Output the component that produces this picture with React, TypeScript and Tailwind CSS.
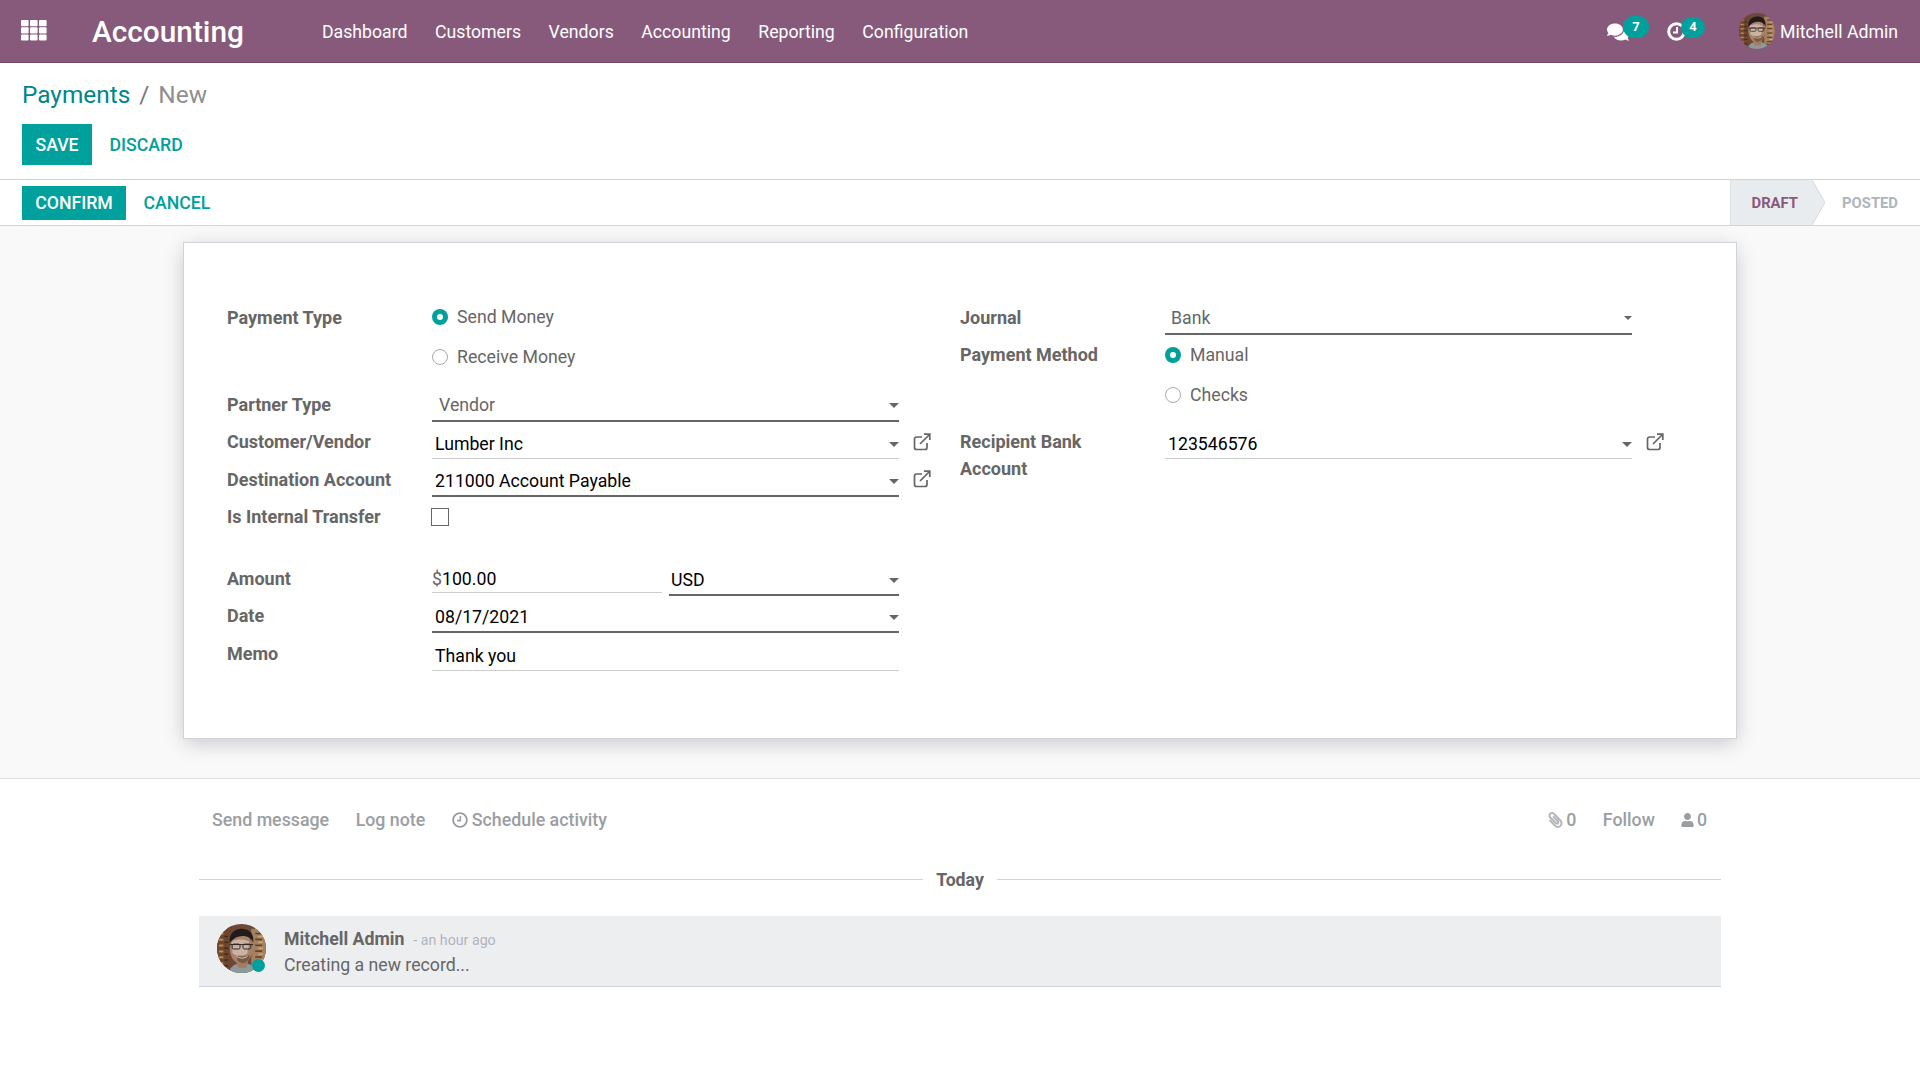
import React from 'react';
import { FaComments, FaPaperclip, FaUser } from 'react-icons/fa';

const navItems = ['Dashboard', 'Customers', 'Vendors', 'Accounting', 'Reporting', 'Configuration'];

const Caret = ({ small }: { small?: boolean }) => (
  <span className={small ? 'border-x-[4px] border-t-[4px] border-x-transparent border-t-[#666]' : 'border-x-[5px] border-t-[5px] border-x-transparent border-t-[#666]'} />
);

const ExternalIcon = () => (
  <svg viewBox="0 0 18 18" className="h-[18px] w-[18px] fill-none stroke-[#666] stroke-[1.7]">
    <path d="M14 10v4.5a2 2 0 0 1-2 2H3.5a2 2 0 0 1-2-2V6a2 2 0 0 1 2-2H9" />
    <path d="M7 11 16 2M11 1.2h5.8V7" />
  </svg>
);

const AppsIcon = () => (
  <svg viewBox="0 0 26 21" className="-mt-[2px] h-[21px] w-[26px] fill-white">
    {[0, 9, 18].map((x) =>
      [0, 7.2, 14.4].map((y) => <rect key={`${x}-${y}`} x={x} y={y} width="7.6" height="6.2" rx="1" />)
    )}
  </svg>
);

const ActivityClock = () => (
  <svg viewBox="0 0 19 19" className="h-[19px] w-[19px] fill-none stroke-white">
    <circle cx="9.5" cy="9.5" r="7.8" strokeWidth="3" />
    <path d="M10 5v5.5H6" strokeWidth="2" />
  </svg>
);

const ScheduleClock = () => (
  <svg viewBox="0 0 16 16" className="h-[16px] w-[16px] fill-none stroke-[#9a9ea3]">
    <circle cx="8" cy="8" r="6.9" strokeWidth="1.9" />
    <path d="M8.4 4v4.6H5" strokeWidth="1.6" />
  </svg>
);

// rough drawing of the user photo
const Avatar = ({ className }: { className: string }) => (
  <svg viewBox="0 0 100 100" className={className}>
    <defs>
      <clipPath id="avatar-clip"><circle cx="50" cy="50" r="50" /></clipPath>
    </defs>
    <g clipPath="url(#avatar-clip)">
      <rect width="100" height="100" fill="#6d4a36" />
      <rect x="0" y="0" width="30" height="100" fill="#6e4630" />
      <rect x="70" y="10" width="30" height="75" fill="#a4805f" />
      {[18, 30, 42, 54, 66, 78].map((y) => (
        <g key={y}>
          <rect x="4" y={y} width="9" height="4" fill="#c08a50" />
          <rect x="15" y={y + 6} width="8" height="3" fill="#3f2a1e" />
          <rect x="78" y={y} width="14" height="3" fill="#5a3d2c" />
          <rect x="84" y={y + 6} width="10" height="3" fill="#d0a478" />
        </g>
      ))}
      <path d="M24 100c2-14 14-20 28-20s30 6 32 20z" fill="#8d9a9c" />
      <path d="M38 74h26l-4 16H44z" fill="#a47c62" />
      <ellipse cx="49" cy="50" rx="23" ry="31" fill="#a8836c" />
      <path d="M30 36c10-6 26-6 36 0l-4 24c-8 6-22 6-30 0z" fill="#c9b3a4" />
      <path d="M42 66c-4 8 4 14 10 14s16-6 14-18l-4 4z" fill="#7a5847" />
      <path d="M26 38c-2-20 12-30 28-28 14 1 22 12 20 28-3-8-8-12-16-13-12-2-22 2-32 13z" fill="#211b1c" />
      <g fill="none" stroke="#2f2523" strokeWidth="2">
        <path d="M26 42h48" />
        <rect x="31" y="41" width="16" height="10" rx="3" />
        <rect x="53" y="41" width="16" height="10" rx="3" />
      </g>
      <path d="M39 65c6 5 18 5 24 0-3 7-20 7-24 0z" fill="#efe6dd" />
    </g>
  </svg>
);

const Radio = ({ label, checked }: { label: string; checked?: boolean }) => (
  <div className="flex h-[40px] items-center gap-[9px] text-[#666]">
    {checked ? (
      <span className="flex h-[16px] w-[16px] items-center justify-center rounded-full bg-[#00A09D]">
        <span className="h-[6px] w-[6px] rounded-full bg-white" />
      </span>
    ) : (
      <span className="h-[16px] w-[16px] rounded-full border border-[#a9a9a9] bg-white" />
    )}
    <span>{label}</span>
  </div>
);

const FieldLabel = ({ children }: { children: React.ReactNode }) => (
  <div className="pt-[6.5px] text-[18px] leading-[27px] font-bold text-[#666]">{children}</div>
);

type SelectProps = {
  value: string;
  pale?: boolean;
  thick?: boolean;
  small?: boolean;
  indent?: string;
  link?: boolean;
};

const SelectValue = ({ value, pale, thick, small, indent = 'pl-[3px]', link }: SelectProps) => (
  <div className="relative">
    <div className={`flex h-[37.5px] items-center justify-between ${indent} ${pale ? 'pt-[7px] text-[#666]' : 'pt-[9px] text-black'} ${thick ? 'border-b-2 border-[#666]' : 'border-b border-[#ccc]'}`}>
      <span>{value}</span>
      <Caret small={small} />
    </div>
    {link && (
      <span className="absolute top-[11px] left-[481px]">
        <ExternalIcon />
      </span>
    )}
  </div>
);

const Row = ({ label, children }: { label: React.ReactNode; children: React.ReactNode }) => (
  <div className="grid grid-cols-[205px_467px]">
    <FieldLabel>{label}</FieldLabel>
    {children}
  </div>
);

export default function App() {
  return (
    <div className="min-h-screen w-full bg-white text-[17.7px] [font-family:Roboto,sans-serif]">
      <header className="flex h-[63px] items-center border-b border-[#6f4a66] bg-[#875A7B] pr-[22px] pl-[21px] text-white">
        <AppsIcon />
        <span className="ml-[45px] pt-[2px] text-[29.8px] font-medium">Accounting</span>
        <nav className="ml-[78px] flex gap-[27.5px] pt-[2px]">
          {navItems.map((item) => (
            <span key={item}>{item}</span>
          ))}
        </nav>
        <div className="ml-auto flex items-center">
          <span className="relative mr-[34px] h-[20px] w-[26px] translate-y-[1px]">
            <FaComments className="h-[20px] w-[22px]" />
            <span className="absolute -top-[6px] left-[16px] flex h-[22px] w-[26px] items-center justify-center rounded-full bg-[#00A09D] text-[13px] font-bold">7</span>
          </span>
          <span className="relative mr-[54px] h-[19px] w-[18px]">
            <ActivityClock />
            <span className="absolute -top-[5px] left-[14px] flex h-[21px] w-[24px] items-center justify-center rounded-full bg-[#00A09D] text-[13px] font-bold">4</span>
          </span>
          <Avatar className="h-[36px] w-[36px]" />
          <span className="ml-[5px] pt-[2px]">Mitchell Admin</span>
        </div>
      </header>

      <section className="h-[117px] border-b border-[#ced4da] px-[22px]">
        <div className="flex h-[61px] items-center pt-[3px] text-[24.4px]">
          <span className="text-[#00868b]">Payments</span>
          <span className="mx-[9px] text-[#777]">/</span>
          <span className="text-[#8f8f8f]">New</span>
        </div>
        <div className="flex items-center font-medium">
          <button className="h-[41px] w-[70px] bg-[#00A09D] pt-[1px] text-white">SAVE</button>
          <span className="ml-[17.5px] pt-[1px] text-[#00A09D]">DISCARD</span>
        </div>
      </section>

      <section className="flex h-[46px] items-center justify-between border-b border-[#ced4da] pl-[22px]">
        <div className="flex items-center font-medium">
          <button className="h-[34px] w-[104px] bg-[#00A09D] pt-[1px] text-white">CONFIRM</button>
          <span className="ml-[17.5px] pt-[1px] text-[#00A09D]">CANCEL</span>
        </div>
        <div className="flex h-full items-center text-[14.8px] font-bold">
          <div className="relative flex h-full w-[82px] items-center justify-end border-l border-[#dee2e6] bg-[#e9ecef] pt-[1px] pr-[14px] text-[#875A7B]">
            DRAFT
            <svg viewBox="0 0 13 45" className="absolute top-0 -right-[13px] h-[45px] w-[13px]">
              <path d="M0 0 13 22.5 0 45z" fill="#e9ecef" />
              <path d="M0 0 13 22.5 0 45" fill="none" stroke="#d5d9dd" />
            </svg>
          </div>
          <div className="flex w-[108px] items-center justify-end pt-[1px] pr-[22px] text-[#adb5bd]">POSTED</div>
        </div>
      </section>

      <main className="h-[553px] border-b border-[#dee2e6] bg-[#f9f9f9] pt-[16px]">
        <div className="mx-auto h-[497px] w-[1554px] border border-[#ced4da] bg-white pt-[54px] pl-[43px] shadow-[0_5px_20px_-1px_rgba(0,0,0,0.2)]">
          <div className="grid grid-cols-[733px_1fr]">
            <div>
              <div className="grid grid-cols-[205px_467px]">
                <FieldLabel>Payment Type</FieldLabel>
                <div>
                  <Radio label="Send Money" checked />
                  <Radio label="Receive Money" />
                </div>
              </div>
              <div className="mt-[7px]">
                <Row label="Partner Type">
                  <SelectValue value="Vendor" pale thick indent="pl-[7px]" />
                </Row>
                <Row label="Customer/Vendor">
                  <SelectValue value="Lumber Inc" link />
                </Row>
                <Row label="Destination Account">
                  <SelectValue value="211000 Account Payable" thick link />
                </Row>
                <Row label="Is Internal Transfer">
                  <div className="flex h-[37.5px] items-center pt-[4px]">
                    <span className="-ml-[1px] h-[18px] w-[18px] border border-[#666] bg-white" />
                  </div>
                </Row>
              </div>
              <div className="mt-[24px]">
                <Row label="Amount">
                  <div className="grid grid-cols-[230px_230px] gap-[7px]">
                    <div className="flex h-[34.5px] items-center border-b border-[#ccc] pt-[9px] text-black">
                      <span className="text-[#666]">$</span>100.00
                    </div>
                    <SelectValue value="USD" thick indent="pl-[2px]" />
                  </div>
                </Row>
                <Row label="Date">
                  <SelectValue value="08/17/2021" thick />
                </Row>
                <Row label="Memo">
                  <div className="flex h-[37.5px] items-center border-b border-[#ccc] pt-[10px] pl-[3px] text-black">Thank you</div>
                </Row>
              </div>
            </div>

            <div>
              <Row label="Journal">
                <SelectValue value="Bank" pale thick small indent="pl-[6px]" />
              </Row>
              <div className="mt-[0.5px] grid grid-cols-[205px_467px]">
                <div className="-mt-[1px]">
                  <FieldLabel>Payment Method</FieldLabel>
                </div>
                <div>
                  <Radio label="Manual" checked />
                  <Radio label="Checks" />
                </div>
              </div>
              <div className="mt-[6.5px]">
                <Row label={<>Recipient Bank<br />Account</>}>
                  <SelectValue value="123546576" link />
                </Row>
              </div>
            </div>
          </div>
        </div>
      </main>

      <section className="mx-auto w-[1522px]">
        <div className="flex h-[81px] items-center justify-between pt-[1px] pr-[14px] pl-[13px] text-[17.8px] font-medium text-[#9a9ea3]">
          <div className="flex items-center gap-[26.5px]">
            <span>Send message</span>
            <span>Log note</span>
            <span className="flex items-center gap-[4px]">
              <ScheduleClock />
              Schedule activity
            </span>
          </div>
          <div className="flex items-center gap-[26.5px]">
            <span className="flex items-center gap-[3px]">
              <FaPaperclip className="h-[16px] w-[15px] -scale-x-100 text-[#b4b7ba]" />0
            </span>
            <span>Follow</span>
            <span className="flex items-center gap-[2.5px]">
              <FaUser className="h-[14px] w-[13px]" />0
            </span>
          </div>
        </div>

        <div className="flex h-[38px] items-center gap-[13px]">
          <span className="h-px flex-1 bg-[#ced4da]" />
          <span className="pt-[2px] font-bold text-[#666]">Today</span>
          <span className="h-px flex-1 bg-[#ced4da]" />
        </div>

        <div className="mt-[18px] flex h-[71px] border-b border-[#ced4da] bg-[#edeef0] pl-[18px]">
          <div className="relative mt-[8px] h-[49px] w-[49px]">
            <Avatar className="h-[49px] w-[49px]" />
            <span className="absolute top-[35px] left-[35px] h-[13px] w-[13px] rounded-full bg-[#00A09D]" />
          </div>
          <div className="ml-[18px] pt-[9.5px] text-[#666]">
            <div className="flex h-[26px] items-baseline">
              <span className="font-bold">Mitchell Admin</span>
              <span className="ml-[9px] text-[14.2px] text-[#adb5bd]">- an hour ago</span>
            </div>
            <div className="leading-[27px]">Creating a new record...</div>
          </div>
        </div>
      </section>
    </div>
  );
}
